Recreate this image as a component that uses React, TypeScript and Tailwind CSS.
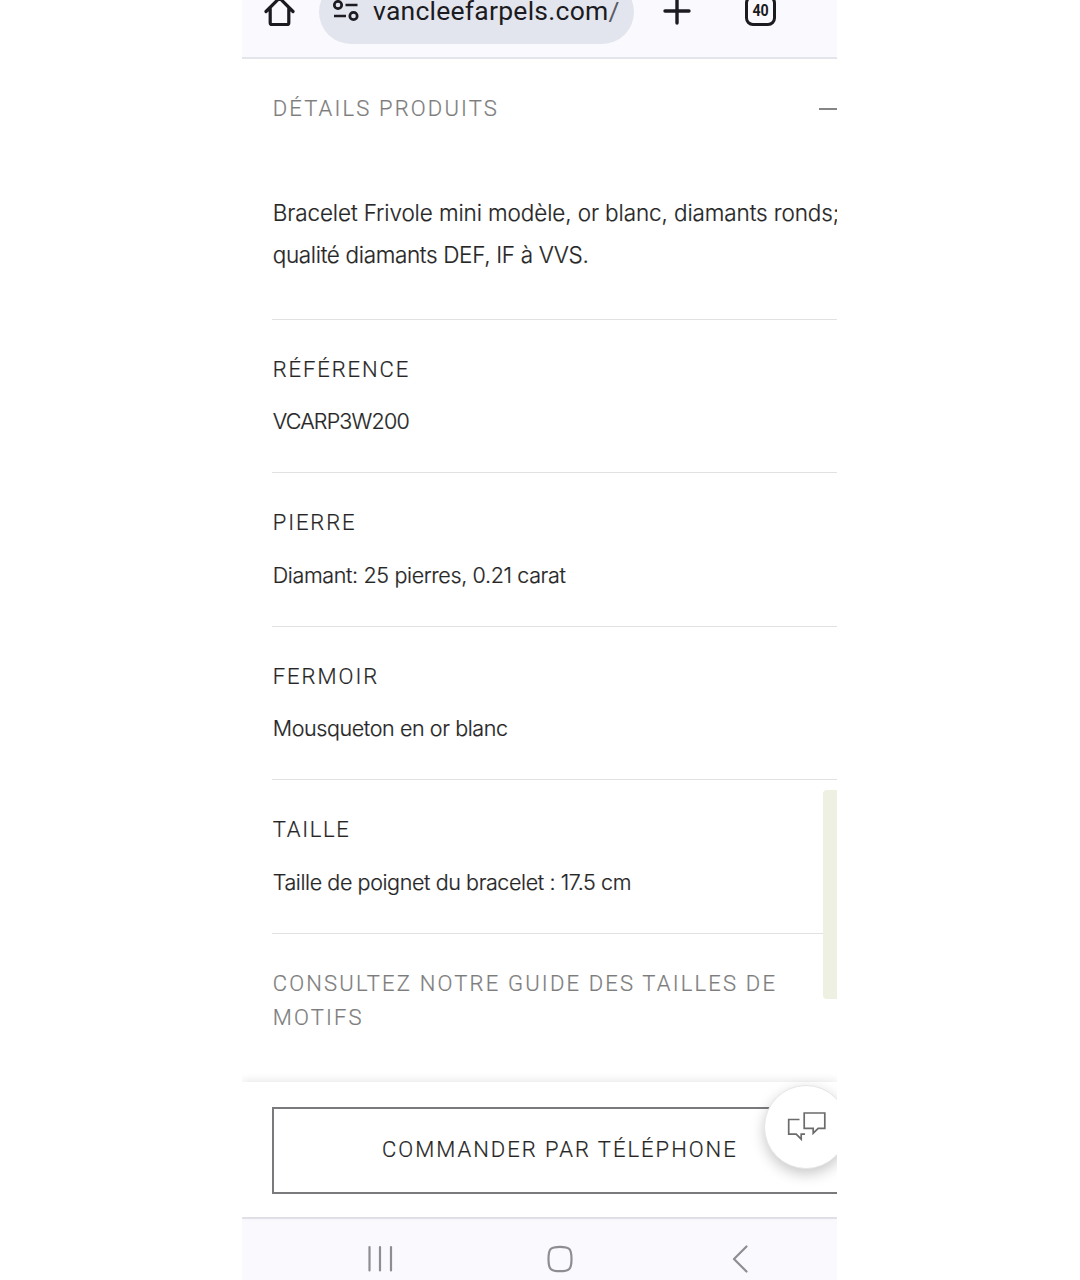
type Detail = {
  title: string;
  titleTracking: string;
  value: string;
  valueTracking: string;
};

const details: Detail[] = [
  {
    title: "RÉFÉRENCE",
    titleTracking: "tracking-[1.9px]",
    value: "VCARP3W200",
    valueTracking: "tracking-[-0.8px]",
  },
  {
    title: "PIERRE",
    titleTracking: "tracking-[1.9px]",
    value: "Diamant: 25 pierres, 0.21 carat",
    valueTracking: "tracking-[-0.36px]",
  },
  {
    title: "FERMOIR",
    titleTracking: "tracking-[2px]",
    value: "Mousqueton en or blanc",
    valueTracking: "tracking-[-0.4px]",
  },
  {
    title: "TAILLE",
    titleTracking: "tracking-[1.7px]",
    value: "Taille de poignet du bracelet : 17.5 cm",
    valueTracking: "tracking-[-0.4px]",
  },
];

const BrowserBar = () => {
  return (
    <header className="relative h-[59px] shrink-0 border-b-2 border-[#e4e4ec] bg-[#f9f9fe] flex items-start text-[#1b1b21]">
      <svg
        className="ml-[20px] mt-[-6px] shrink-0"
        width="34"
        height="34"
        viewBox="0 0 34 34"
        fill="none"
        stroke="currentColor"
        strokeWidth="3.2"
        strokeLinecap="round"
        strokeLinejoin="round"
      >
        <path d="M4 17.5 17.5 4 31 17.5M8.2 14.5v14.2q0 1.8 1.8 1.8h15q1.8 0 1.8-1.8V14.5" />
      </svg>
      <div className="ml-[23px] mt-[-20px] h-[64px] w-[315px] shrink-0 rounded-full bg-[#e3e5ee] flex items-center overflow-hidden">
        <svg
          className="ml-[13px] mt-[-3px] shrink-0"
          width="28"
          height="26"
          viewBox="0 0 28 26"
          fill="none"
          stroke="currentColor"
          strokeWidth="2.7"
        >
          <circle cx="6" cy="7" r="3.7" />
          <path d="M13.500 7h12M2 18h12" />
          <circle cx="21.5" cy="18" r="3.7" />
        </svg>
        <span className="ml-[13px] mt-[-2px] w-[247px] overflow-hidden whitespace-nowrap font-['Roboto',sans-serif] font-normal text-[26.5px] leading-[34px] tracking-[0.25px]">
          vancleefarpels.com<span className="text-[#5b5c66]">/f</span>
        </span>
      </div>
      <svg
        className="ml-[28px] mt-[-4px] shrink-0"
        width="30"
        height="30"
        viewBox="0 0 30 30"
        fill="none"
        stroke="currentColor"
        strokeWidth="3.4"
        strokeLinecap="round"
      >
        <path d="M15 3v24M3 15h24" />
      </svg>
      <div className="ml-[53px] mt-[-5px] h-[31px] w-[31px] shrink-0 rounded-[8px] border-3 border-current flex items-center justify-center font-['Roboto',sans-serif] text-[15px] font-bold">
        <span className="mt-[2px] scale-x-95 scale-y-110">40</span>
      </div>
    </header>
  );
};

const DetailRow = ({ title, titleTracking, value, valueTracking }: Detail) => {
  return (
    <section className="h-[153.5px] border-t border-[#e1e1e1] pt-[34px] pl-[0.7px]">
      <h3
        className={`font-['Roboto',sans-serif] text-[22px] leading-[32px] ${titleTracking}`}
      >
        {title}
      </h3>
      <p
        className={`mt-[19.5px] whitespace-nowrap text-[21.5px] leading-[32px] ${valueTracking}`}
      >
        {value}
      </p>
    </section>
  );
};

const OrderBar = () => {
  return (
    <div className="relative h-[135px] shrink-0 bg-white pt-[25px] pl-[30px] shadow-[0_-2px_8px_rgba(0,0,0,0.09)] [-webkit-text-stroke:0.2px]">
      <button className="h-[87px] w-[580px] border-2 border-[#7a7a7c] pl-[108px] pb-[2px] text-left font-['Roboto',sans-serif] text-[22px] tracking-[2px] whitespace-nowrap">
        COMMANDER PAR TÉLÉPHONE
      </button>
      {/* chat bubble sits over the right end of the button */}
      <div className="absolute left-[522px] top-[3px] flex h-[84px] w-[84px] items-center justify-center rounded-full border border-[#e6e6e6] bg-white shadow-[0_5px_14px_rgba(0,0,0,0.22)]">
        <svg
          className="mt-[-2px] ml-px"
          width="42"
          height="32"
          viewBox="0 0 42 32"
          fill="none"
          stroke="#6b6b6b"
          strokeWidth="1.7"
        >
          <path d="M18.2 3h20.6v15.4h-6.6l-5 4.8v-4.8h-9z" />
          <path d="M13.5 9.5H2.7v14.6h7.5l5 5v-5h3.8" />
        </svg>
      </div>
    </div>
  );
};

const NavBar = () => {
  return (
    <nav className="h-[63px] shrink-0 border-t-2 border-[#e4e4ea] bg-[#f9f9fe]">
      <svg
        width="595"
        height="61"
        viewBox="0 0 595 61"
        fill="none"
        stroke="#8e8e92"
        strokeWidth="2.2"
        strokeLinecap="round"
        strokeLinejoin="round"
      >
        <path d="M127.500 28v23.500M138 28v23.500M149 28v23.500" />
        <path d="M318 27.800c9.500 0 11.500 2 11.500 12.200s-2 12.200-11.500 12.200-11.500-2-11.500-12.200 2-12.200 11.500-12.200z" />
        <path d="M504.500 27.500l-12.500 12.500 12.500 12.500" />
      </svg>
    </nav>
  );
};

export default function App() {
  return (
    <div className="h-[1280px] w-[1080px] bg-white pl-[242px] overflow-hidden">
      <div className="flex h-full w-[595px] flex-col overflow-hidden font-['Inter',sans-serif] font-light text-[#262626]">
        <BrowserBar />
        <main className="relative h-[1023px] shrink-0 overflow-hidden pl-[30px] [-webkit-text-stroke:0.2px]">
          <div className="flex h-[99px] items-center pl-[0.7px] font-['Roboto',sans-serif] text-[22px] tracking-[2.15px] text-[#7d7d7d]">
            <h2 className="w-[546.3px] shrink-0">DÉTAILS PRODUITS</h2>
            <span className="h-[2px] w-[30px] shrink-0 bg-[#858585]" />
          </div>
          <p className="h-[160.6px] pt-[34px] pl-[0.7px] whitespace-nowrap text-[22.5px] leading-[42px]">
            <span className="block tracking-[-0.11px]">
              Bracelet Frivole mini modèle, or blanc, diamants ronds;
            </span>
            <span className="block tracking-[-0.34px]">
              qualité diamants DEF, IF à VVS.
            </span>
          </p>
          {details.map((detail) => (
            <DetailRow key={detail.title} {...detail} />
          ))}
          <div className="border-t border-[#e1e1e1] pt-[33px] pl-[0.7px] font-['Roboto',sans-serif] text-[22px] leading-[34px] tracking-[2.18px] text-[#7d7d7d] whitespace-nowrap">
            CONSULTEZ NOTRE GUIDE DES TAILLES DE
            <br />
            MOTIFS
          </div>
          {/* side tab pinned to the edge of the screen */}
          <div className="absolute right-0 top-[731px] h-[209px] w-[14px] rounded-l-[4px] bg-[#eef0e1]" />
        </main>
        <OrderBar />
        <NavBar />
      </div>
    </div>
  );
}
